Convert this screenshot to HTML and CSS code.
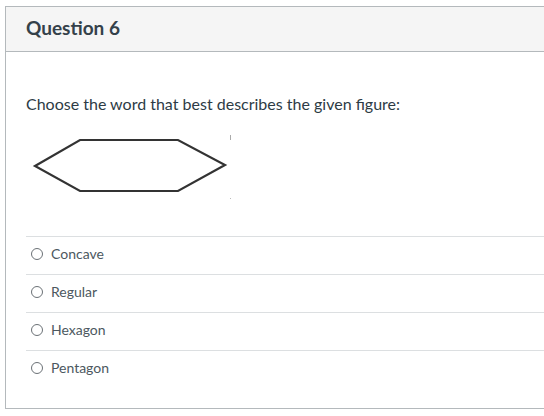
FILE: index.html
```html
<!DOCTYPE html>
<html>
<head>
<meta charset="utf-8">
<link rel="stylesheet" href="styles.css">
</head>
<body>
<div class="card">
  <div class="header"><h2 class="title">Question 6</h2></div>
  <div class="content">
    <p class="prompt">Choose the word that best describes the given figure:</p>
    <svg class="figure" width="206" height="70" viewBox="0 0 206 70">
      <polygon points="9,34 54,8 152,8 199,33 152,59 54,59" fill="none" stroke="#333" stroke-width="2.2" stroke-linejoin="miter"/>
      <line x1="204.5" y1="3" x2="204.5" y2="8" stroke="#aaa" stroke-width="1"/>
      <rect x="204" y="66" width="1" height="1" fill="#bbb"/>
    </svg>
    <ul class="options">
      <li class="option"><span class="radio"></span><span class="label">Concave</span></li>
      <li class="option"><span class="radio"></span><span class="label">Regular</span></li>
      <li class="option"><span class="radio"></span><span class="label">Hexagon</span></li>
      <li class="option"><span class="radio"></span><span class="label">Pentagon</span></li>
    </ul>
  </div>
</div>
</body>
</html>
```

FILE: styles.css
```css
html, body {
  margin: 0;
  padding: 0;
  background: #fff;
  overflow: hidden;
}
body {
  font-family: Lato, "Liberation Sans", sans-serif;
  color: #2d3b45;
}
.card {
  margin: 6px 0 0 5px;
  width: 560px;
  border: 1px solid #b4b9bc;
  border-right: none;
  box-sizing: border-box;
  height: 403px;
}
.header {
  height: 45px;
  box-sizing: border-box;
  background: #f5f5f5;
  border-bottom: 1px solid #b4b9bc;
  padding: 0 0 4px 20px;
  display: flex;
  align-items: center;
}
.title {
  margin: 0;
  font-size: 19px;
  font-weight: 700;
  color: #34414a;
}
.content {
  padding: 0 0 0 20px;
}
.prompt {
  margin: 0;
  padding-top: 42px;
  font-size: 16px;
  line-height: 20px;
  color: #2d3b45;
}
.figure {
  display: block;
  margin-top: 18px;
}
.options {
  list-style: none;
  margin: 34px 0 0 0;
  padding: 0;
}
.option {
  height: 38px;
  box-sizing: border-box;
  border-top: 1px solid #dcdfe1;
  display: flex;
  align-items: center;
  padding: 0 0 4px 5px;
}
.radio {
  width: 10px;
  height: 10px;
  border: 1px solid #6b7176;
  border-radius: 50%;
  margin-right: 8px;
  margin-top: 1px;
  flex: none;
}
.label {
  font-size: 14px;
  color: #4c5860;
}
```
